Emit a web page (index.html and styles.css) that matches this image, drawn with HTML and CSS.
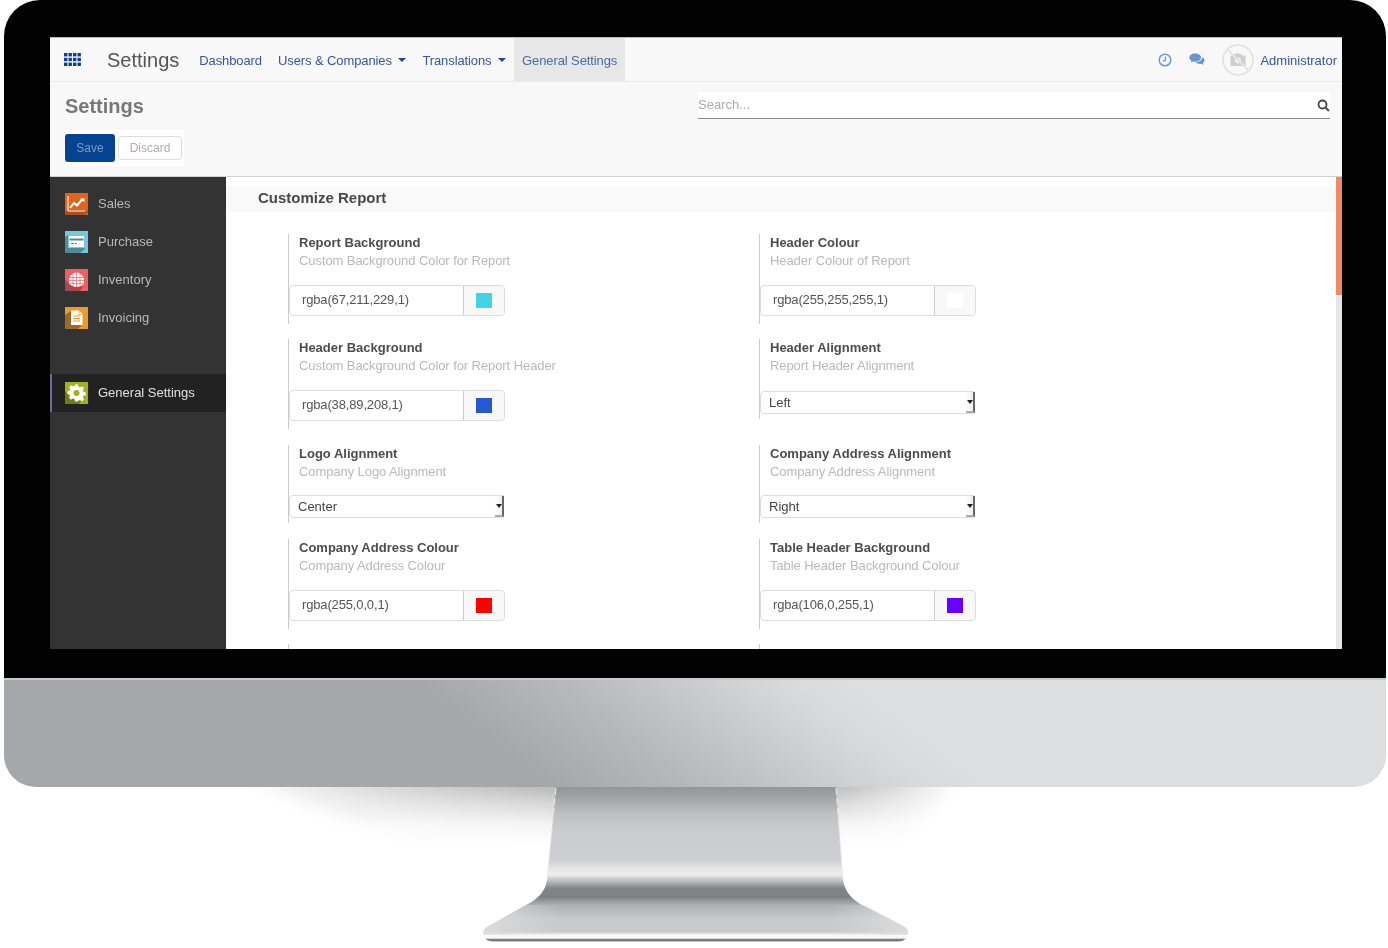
FILE: index.html
```html
<!DOCTYPE html>
<html lang="en">
<head>
<meta charset="utf-8">
<title>Settings</title>
<link rel="stylesheet" href="styles.css">
</head>
<body>
<div class="monitor">
  <div class="bezel">
    <div class="screen">
      <header class="navbar">
        <svg class="apps" width="17" height="13" viewBox="0 0 17 13"><g fill="#0b3d91"><rect x="0" y="0" width="3.4" height="3.4"/><rect x="4.5" y="0" width="3.4" height="3.4"/><rect x="9" y="0" width="3.4" height="3.4"/><rect x="13.5" y="0" width="3.4" height="3.4"/><rect x="0" y="4.8" width="3.4" height="3.4"/><rect x="4.5" y="4.8" width="3.4" height="3.4"/><rect x="9" y="4.8" width="3.4" height="3.4"/><rect x="13.5" y="4.8" width="3.4" height="3.4"/><rect x="0" y="9.6" width="3.4" height="3.4"/><rect x="4.5" y="9.6" width="3.4" height="3.4"/><rect x="9" y="9.6" width="3.4" height="3.4"/><rect x="13.5" y="9.6" width="3.4" height="3.4"/></g></svg>
        <span class="brand">Settings</span>
        <nav class="menu">
          <a class="menu-item">Dashboard</a>
          <a class="menu-item">Users &amp; Companies <i class="caret"></i></a>
          <a class="menu-item">Translations <i class="caret"></i></a>
          <a class="menu-item active">General Settings</a>
        </nav>
        <div class="systray">
          <svg class="tray-clock" width="14" height="14" viewBox="0 0 14 14"><circle cx="7" cy="7" r="5.8" fill="none" stroke="#6f9bd0" stroke-width="1.5"/><path d="M7.4 3.6V7.6H4.6" fill="none" stroke="#6f9bd0" stroke-width="1.3"/></svg>
          <svg class="tray-chat" width="16" height="13" viewBox="0 0 16 13"><path d="M6.2 0.5C2.9 0.5 0.3 2.3 0.3 4.6c0 1.3.9 2.5 2.2 3.2L1.7 9.6l2.4-1.2c.7.2 1.400.3 2.100.3 3.300 0 5.900-1.800 5.900-4.100S9.500.5 6.200.5z" fill="#6a96c8"/><path d="M13.300 4.300c0 2.800-3 4.900-6.600 5 .9 1 2.500 1.600 4.200 1.600.5 0 1-.1 1.500-.2l2 1.300-.5-1.900c1-.6 1.600-1.500 1.600-2.600 0-1.400-.9-2.500-2.200-3.200z" fill="#6a96c8"/></svg>
          <span class="avatar">
            <svg width="32" height="32" viewBox="0 0 32 32"><circle cx="16" cy="16" r="15" fill="#f8f8f8" stroke="#e3e3e3" stroke-width="1.800"/><path d="M8.500 11.500h3.500l1.500-2h5l1.500 2h3.500V22H8.500z" fill="#cfcfcf"/><circle cx="16" cy="16.500" r="3" fill="#f0f0f0"/><path d="M6 6l20 20" stroke="#e3e3e3" stroke-width="1.800"/></svg>
          </span>
          <a class="user">Administrator</a>
        </div>
      </header>
      <section class="control">
        <div class="control-left">
          <h1 class="page-title">Settings</h1>
          <div class="buttons">
            <button class="btn btn-primary">Save</button>
            <button class="btn btn-default">Discard</button>
          </div>
        </div>
        <div class="search">
          <span class="search-text">Search...</span>
          <svg width="13" height="13" viewBox="0 0 13 13"><circle cx="5.500" cy="5.500" r="4" fill="none" stroke="#444" stroke-width="1.800"/><path d="M8.500 8.500L12 12" stroke="#555" stroke-width="2.200"/></svg>
        </div>
      </section>
      <div class="body">
        <aside class="sidebar">
          <a class="side-item">
            <svg class="tile" viewBox="0 0 23 22"><rect width="23" height="22" fill="#e0641c"/><path d="M0 22V19L3 17H21L23 18V19L20 22Z" fill="#a9501c"/><path d="M3 3v15h17.500" fill="none" stroke="#fff" stroke-width="1"/><path d="M5 15l4-5 3 2.500 5.500-6.500" fill="none" stroke="#fff" stroke-width="2"/><path d="M15.500 5.500h4v4z" fill="#fff"/></svg>
            <span>Sales</span>
          </a>
          <a class="side-item">
            <svg class="tile" viewBox="0 0 23 22"><rect width="23" height="22" fill="#74c9d8"/><path d="M0 22V6L3 4V17H20V18L15 22Z" fill="#4f8a98"/><rect x="4" y="5" width="15" height="11" fill="#fff"/><rect x="4.500" y="7.500" width="14" height="2" fill="#4f8a98"/><rect x="6" y="12" width="3" height="1" fill="#4f8a98"/><rect x="10" y="12" width="2" height="1" fill="#4f8a98"/></svg>
            <span>Purchase</span>
          </a>
          <a class="side-item">
            <svg class="tile" viewBox="0 0 23 22"><rect width="23" height="22" fill="#ef5f66"/><path d="M0 22V10L5 16 18 18 15 22Z" fill="#a8484e"/><path d="M4 10C5 6.500 8 3.500 11.500 3.500S18 6.500 19 10V14C17 16.500 14.500 18 11.500 18S6 16.500 4 14z" fill="#fff"/><path d="M4 8.500h15M4 11.500h15M5 14.500h13M8 5V17M11.500 3.500V18M15 5V17" stroke="#ef5f66" stroke-width=".7" fill="none"/></svg>
            <span>Inventory</span>
          </a>
          <a class="side-item">
            <svg class="tile" viewBox="0 0 23 22"><rect width="23" height="22" fill="#eb9a2e"/><path d="M0 22V8L6 4V18H17L13 22Z" fill="#9c6a28"/><path d="M6 3.500h8l3.500 3.500v11H6z" fill="#fff"/><path d="M14 4v3.500h3" fill="none" stroke="#eb9a2e" stroke-width=".8"/><path d="M8 9h7M8 11.500h7M8 14h7" stroke="#eb9a2e" stroke-width="1"/></svg>
            <span>Invoicing</span>
          </a>
          <a class="side-item current">
            <svg class="tile" viewBox="0 0 23 22"><rect width="23" height="22" fill="#a4b020"/><path d="M0 22V9L5 15 16 19 14 22Z" fill="#6e7c14"/><path d="M10 3h3l.5 2.300 1.500.6 2-1.200 2 2-1.200 2 .6 1.500 2.300.5v3l-2.300.5-.6 1.500 1.200 2-2 2-2-1.200-1.500.6L13 20h-3l-.5-2.400-1.500-.6-2 1.200-2-2 1.200-2-.6-1.500L2.500 12.700v-3l2.300-.5.6-1.500-1.200-2 2-2 2 1.200 1.500-.6z" fill="#fff" transform="translate(0 -.5)"/><circle cx="11.500" cy="11" r="3" fill="#a4b020"/></svg>
            <span>General Settings</span>
          </a>
        </aside>
        <main class="content">
          <h2 class="section-head">Customize Report</h2>
          <div class="fields">
            <div class="field">
              <div class="field-title">Report Background</div>
              <div class="field-help">Custom Background Color for Report</div>
              <div class="color"><span class="color-value">rgba(67,211,229,1)</span><span class="color-addon"><i class="swatch" style="background:rgba(67,211,229,1)"></i></span></div>
            </div>
            <div class="field">
              <div class="field-title">Header Colour</div>
              <div class="field-help">Header Colour of Report</div>
              <div class="color"><span class="color-value">rgba(255,255,255,1)</span><span class="color-addon"><i class="swatch" style="background:rgba(255,255,255,1)"></i></span></div>
            </div>
            <div class="field">
              <div class="field-title">Header Background</div>
              <div class="field-help">Custom Background Color for Report Header</div>
              <div class="color"><span class="color-value">rgba(38,89,208,1)</span><span class="color-addon"><i class="swatch" style="background:rgba(38,89,208,1)"></i></span></div>
            </div>
            <div class="field">
              <div class="field-title">Header Alignment</div>
              <div class="field-help">Report Header Alignment</div>
              <div class="select select-low"><span>Left</span><i class="select-btn"></i></div>
            </div>
            <div class="field">
              <div class="field-title">Logo Alignment</div>
              <div class="field-help">Company Logo Alignment</div>
              <div class="select"><span>Center</span><i class="select-btn"></i></div>
            </div>
            <div class="field">
              <div class="field-title">Company Address Alignment</div>
              <div class="field-help">Company Address Alignment</div>
              <div class="select"><span>Right</span><i class="select-btn"></i></div>
            </div>
            <div class="field">
              <div class="field-title">Company Address Colour</div>
              <div class="field-help">Company Address Colour</div>
              <div class="color"><span class="color-value">rgba(255,0,0,1)</span><span class="color-addon"><i class="swatch" style="background:rgba(255,0,0,1)"></i></span></div>
            </div>
            <div class="field">
              <div class="field-title">Table Header Background</div>
              <div class="field-help">Table Header Background Colour</div>
              <div class="color"><span class="color-value">rgba(106,0,255,1)</span><span class="color-addon"><i class="swatch" style="background:rgba(106,0,255,1)"></i></span></div>
            </div>
            <div class="field field-stub"></div>
            <div class="field field-stub"></div>
          </div>
          <div class="scrollbar"><div class="scroll-thumb"></div></div>
        </main>
      </div>
    </div>
  </div>
  <div class="chin"></div>
  <svg class="stand" width="1388" height="161" viewBox="0 787 1388 161">
    <defs>
      <linearGradient id="metal" gradientUnits="userSpaceOnUse" x1="0" y1="787" x2="0" y2="942">
        <stop offset="0" stop-color="#949599"/>
        <stop offset=".08" stop-color="#a6a7ab"/>
        <stop offset=".17" stop-color="#bebfc3"/>
        <stop offset=".28" stop-color="#cbccd0"/>
        <stop offset=".47" stop-color="#cdced1"/>
        <stop offset=".52" stop-color="#e4e4e5"/>
        <stop offset=".565" stop-color="#eeeeee"/>
        <stop offset=".6" stop-color="#c4c4c5"/>
        <stop offset=".655" stop-color="#828385"/>
        <stop offset=".71" stop-color="#808183"/>
        <stop offset=".76" stop-color="#aeafb1"/>
        <stop offset=".85" stop-color="#c8c9cb"/>
        <stop offset=".935" stop-color="#c8c9cb"/>
        <stop offset=".955" stop-color="#f8f8f8"/>
        <stop offset=".975" stop-color="#f8f8f8"/>
        <stop offset=".985" stop-color="#6f6f6f"/>
        <stop offset="1" stop-color="#8a8a8a"/>
      </linearGradient>
      <linearGradient id="shade" gradientUnits="userSpaceOnUse" x1="230" y1="787" x2="555" y2="787">
        <stop offset="0" stop-color="#fff"/>
        <stop offset=".45" stop-color="#dadada"/>
        <stop offset="1" stop-color="#b8b8b8"/>
      </linearGradient>
      <linearGradient id="shadeR" gradientUnits="userSpaceOnUse" x1="960" y1="787" x2="835" y2="787">
        <stop offset="0" stop-color="#fff"/>
        <stop offset="1" stop-color="#bcbcbc"/>
      </linearGradient>
      <linearGradient id="glow" gradientUnits="userSpaceOnUse" x1="483" y1="0" x2="908" y2="0">
        <stop offset="0" stop-color="#e0e0e2" stop-opacity=".8"/>
        <stop offset=".18" stop-color="#e0e0e2" stop-opacity="0"/>
        <stop offset=".82" stop-color="#e0e0e2" stop-opacity="0"/>
        <stop offset="1" stop-color="#e0e0e2" stop-opacity=".8"/>
      </linearGradient>
      <linearGradient id="fade" gradientUnits="userSpaceOnUse" x1="0" y1="787" x2="0" y2="845">
        <stop offset="0" stop-color="#fff" stop-opacity="1"/>
        <stop offset=".3" stop-color="#fff" stop-opacity=".55"/>
        <stop offset=".65" stop-color="#fff" stop-opacity=".15"/>
        <stop offset="1" stop-color="#fff" stop-opacity="0"/>
      </linearGradient>
      <mask id="fadeMask" maskUnits="userSpaceOnUse" x="0" y="787" width="1388" height="70"><rect x="0" y="787" width="1388" height="70" fill="url(#fade)"/></mask>
      <filter id="soft" x="-10%" y="-30%" width="120%" height="160%"><feGaussianBlur stdDeviation="8"/></filter>
    </defs>
    <g mask="url(#fadeMask)">
      <path d="M225 770H570V860H430Z" fill="url(#shade)" filter="url(#soft)"/>
      <path d="M825 770H965L890 860H825Z" fill="url(#shadeR)" filter="url(#soft)"/>
    </g>
    <path d="M556 787H836L843 880C845 892 852 900 864 906L903 926C909 929 909 934 907 937C905 940 902 941.500 898 941.500H494C489 941.500 486 940 484 937C482 934 483 930 487 927L526 905C538 899 545 892 547 880Z" fill="url(#metal)"/>
    <path d="M487 927L526 905H866L903 926C909 929 909 934 907 935H484C482 932 484 929 487 927Z" fill="url(#glow)"/>
    <path d="M556 788L547 880M836 788L843 880" stroke="#e8e8e8" stroke-width="1" stroke-dasharray="7 3" fill="none"/>
  </svg>
</div>
</body>
</html>
```

FILE: styles.css
```css
* { box-sizing: border-box; }
html, body { margin: 0; padding: 0; background: #fff; }
body {
  width: 1388px;
  height: 948px;
  overflow: hidden;
  font-family: "Liberation Sans", Arial, sans-serif;
  font-size: 13px;
}
.monitor { width: 1388px; }
.bezel {
  margin: 0 2px 0 4px;
  height: 678px;
  padding: 37px 44px 0 46px;
  background: #020202;
  border-radius: 36px 36px 0 0;
}
.screen {
  width: 1292px;
  height: 612px;
  overflow: hidden;
  background: #fff;
  display: flex;
  flex-direction: column;
  filter: blur(.4px);
}
.navbar {
  height: 45px;
  flex: none;
  display: flex;
  align-items: center;
  background: #f8f8f8;
  border-top: 1px solid #bbb;
  border-bottom: 1px solid #e9e9e9;
  padding-left: 14px;
  padding-right: 5px;
}
.apps { flex: none; }
.brand { font-size: 20px; color: #555; margin-left: 26px; padding-top: 1px; }
.menu { display: flex; height: 100%; margin-left: 12px; letter-spacing: -.1px; }
.menu-item {
  display: flex;
  align-items: center;
  padding: 1px 8px 0;
  color: #36579a;
  white-space: pre;
}
.menu-item.active { background: #e7e7e7; color: #4a6aa8; }
.caret {
  display: inline-block;
  margin-left: 3px;
  width: 0;
  height: 0;
  border-left: 4px solid transparent;
  border-right: 4px solid transparent;
  border-top: 4px solid #1c4a94;
}
.systray { margin-left: auto; display: flex; align-items: center; }
.tray-chat { margin-left: 17px; }
.avatar { display: flex; margin-left: 17px; }
.user { margin-left: 6px; padding-top: 1px; color: #36579a; }
.control {
  height: 95px;
  flex: none;
  display: flex;
  justify-content: space-between;
  background: #f8f8f8;
  border-bottom: 1px solid #d2d2d2;
  padding: 0 12px 0 15px;
}
.page-title {
  margin: 12px 0 0;
  font-size: 20px;
  line-height: 24px;
  font-weight: bold;
  color: #777;
}
.buttons {
  margin-top: 12px;
  display: inline-flex;
  align-items: center;
  width: 119px;
  height: 36px;
  background: #fff;
  gap: 3px;
}
.btn { font: inherit; font-size: 12px; padding: 0; border-radius: 3px; }
.btn-primary { width: 50px; height: 28px; border: 0; background: #03438f; color: #7f9bc8; }
.btn-default { width: 64px; height: 24px; background: #fff; border: 1px solid #ddd; color: #b4acb0; }
.search {
  width: 632px;
  height: 27px;
  margin-top: 10px;
  display: flex;
  align-items: center;
  justify-content: space-between;
  background: #fff;
  border-bottom: 1px solid #888;
}
.search-text { color: #aaa; padding-bottom: 2px; }
.body { flex: 1; display: flex; min-height: 0; }
.sidebar {
  width: 176px;
  flex: none;
  background: #333;
  padding-top: 8px;
  display: flex;
  flex-direction: column;
}
.side-item {
  height: 38px;
  display: flex;
  align-items: center;
  gap: 10px;
  padding-left: 15px;
  color: #b8b8b8;
}
.side-item span { padding-bottom: 1px; }
.tile { width: 23px; height: 22px; flex: none; }
.side-item.current {
  margin-top: 37px;
  background: #222;
  color: #e0e0e0;
  border-left: 2px solid #6a6aa0;
  padding-left: 13px;
}
.content { flex: 1; position: relative; background: #fff; padding-top: 9px; min-width: 0; }
.section-head {
  margin: 0 0 22px;
  height: 26px;
  padding-left: 32px;
  background: #f9f9f9;
  font-size: 15px;
  line-height: 24px;
  font-weight: bold;
  color: #484848;
}
.fields {
  display: grid;
  grid-template-columns: 471px 471px;
  grid-template-rows: 89px 90px 78px 89px 20px;
  row-gap: 16px;
  align-items: start;
  padding-left: 62px;
}
.field { border-left: 1px solid #ccc; padding-bottom: 8px; }
.field-stub { height: 20px; padding: 0; }
.field-title { padding-left: 10px; line-height: 18px; font-weight: bold; color: #4c4c4c; }
.field-help { padding-left: 10px; line-height: 18px; color: #b9b9b9; letter-spacing: -.08px; }
.color {
  display: flex;
  width: 216px;
  height: 31px;
  margin-top: 15px;
  background: #fff;
  border: 1px solid #ddd;
  border-radius: 4px;
}
.color-value { width: 173px; padding-left: 12px; line-height: 28px; color: #555; letter-spacing: -.15px; }
.color-addon {
  flex: 1;
  display: flex;
  align-items: center;
  justify-content: center;
  background: #f8f8f8;
  border-left: 1px solid #ccc;
  border-radius: 0 4px 4px 0;
}
.swatch { display: block; width: 16px; height: 15px; }
.select {
  display: flex;
  align-items: center;
  justify-content: space-between;
  width: 215px;
  height: 23px;
  margin-top: 14px;
  margin-bottom: -3px;
  padding-left: 8px;
  border: 1px solid #ddd;
  border-radius: 4px 0 0 4px;
  color: #444;
}
.select-low { margin-top: 16px; }
.select-btn {
  position: relative;
  display: block;
  width: 9px;
  height: 21px;
  margin-right: -1px;
  background: linear-gradient(90deg, #fff, #eee);
  border-right: 2px solid #666;
  border-bottom: 2px solid #aaa;
}
.select-btn::after {
  content: "";
  position: absolute;
  top: 8px;
  left: 1px;
  border-left: 3px solid transparent;
  border-right: 3px solid transparent;
  border-top: 4px solid #222;
}
.scrollbar {
  position: absolute;
  top: 0;
  right: 0;
  bottom: 0;
  width: 6px;
  background: #e6e6e6;
}
.scroll-thumb { height: 118px; background: #ef8a60; }
.chin {
  margin: 0 2px 0 4px;
  height: 109px;
  border-top: 2px solid #c9c9cb;
  border-radius: 0 0 32px 32px;
  background: linear-gradient(37deg, #a6a7aa 36%, #b6b7ba 45%, #c8c9cc 53%, #d8d9db 60%, #dddee0 65%);
}
.stand { display: block; }
```
